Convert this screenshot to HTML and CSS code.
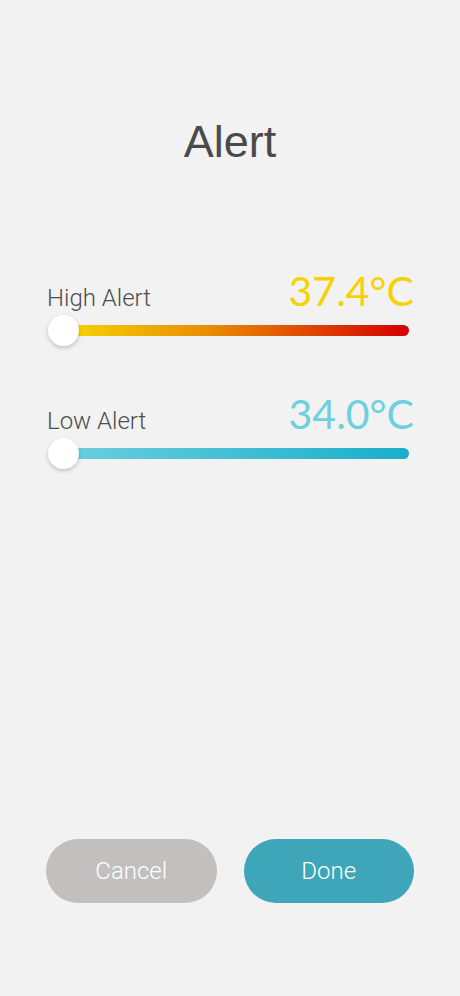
FILE: index.html
```html
<!DOCTYPE html>
<html>
    <head>
        <title>Alert</title>
        <meta charset="UTF-8">
        <meta name="viewport" content="width=device-width, initial-scale=1.0">
        <link rel="stylesheet" href="styles.css">
    </head>
    <body>
        <div class="alert-page">
            <div class="page-title">Alert</div>

            <div class="alert-row high">
                <div class="row-head">
                    <span class="row-label">High Alert</span>
                    <span class="row-value">37.4°C</span>
                </div>
                <div class="track">
                    <div class="thumb"></div>
                </div>
            </div>

            <div class="alert-row low">
                <div class="row-head">
                    <span class="row-label">Low Alert</span>
                    <span class="row-value">34.0°C</span>
                </div>
                <div class="track">
                    <div class="thumb"></div>
                </div>
            </div>

            <div class="btn-row">
                <button class="btn cancel-btn">Cancel</button>
                <button class="btn done-btn">Done</button>
            </div>
        </div>
    </body>
</html>
```

FILE: styles.css
```css
* {
  margin: 0;
  padding: 0;
  box-sizing: border-box;
}

body {
  font-family: "Liberation Sans", Arial, sans-serif;
  background-color: #f2f2f2;
  width: 460px;
  height: 996px;
  overflow: hidden;
}

.alert-page {
  height: 996px;
  display: flex;
  flex-direction: column;
  padding: 0 46px 93px 46px;
}

.page-title {
  margin-top: 114px;
  text-align: center;
  font-size: 45px;
  color: #4a4a4a;
  line-height: 56px;
}

.alert-row {
  display: flex;
  flex-direction: column;
}

.alert-row.high {
  margin-top: 99px;
}

.alert-row.low {
  margin-top: 56px;
}

.row-head {
  display: flex;
  justify-content: space-between;
  align-items: baseline;
  padding-left: 1px;
}

.row-label {
  font-family: Roboto, sans-serif;
  font-weight: 300;
  font-size: 24px;
  color: #4d4d4d;
}

.row-value {
  font-family: Lato, sans-serif;
  font-weight: 400;
  font-size: 41px;
  line-height: 44px;
}

.high .row-value {
  color: #f7d100;
}

.low .row-value {
  color: #6dcfe0;
}

.track {
  position: relative;
  height: 11px;
  margin: 12px 5px 0 6px;
  border-radius: 6px;
}

.high .track {
  background: linear-gradient(to right, #f7dc00, #e98a00 45%, #d40000);
}

.low .track {
  background: linear-gradient(to right, #6dd0de, #1aaecb);
}

.thumb {
  position: absolute;
  left: -4px;
  top: -10px;
  width: 31px;
  height: 31px;
  border-radius: 50%;
  background-color: #ffffff;
  box-shadow: 0 2px 4px rgba(0, 0, 0, 0.2);
}

.btn-row {
  margin-top: auto;
  display: flex;
  gap: 27px;
}

.btn {
  flex: 1;
  height: 64px;
  border: none;
  border-radius: 32px;
  color: #ffffff;
  font-family: Roboto, sans-serif;
  font-weight: 300;
  font-size: 24px;
}

.cancel-btn {
  background-color: #c2c0bf;
}

.done-btn {
  background-color: #3ea6b8;
}
```
